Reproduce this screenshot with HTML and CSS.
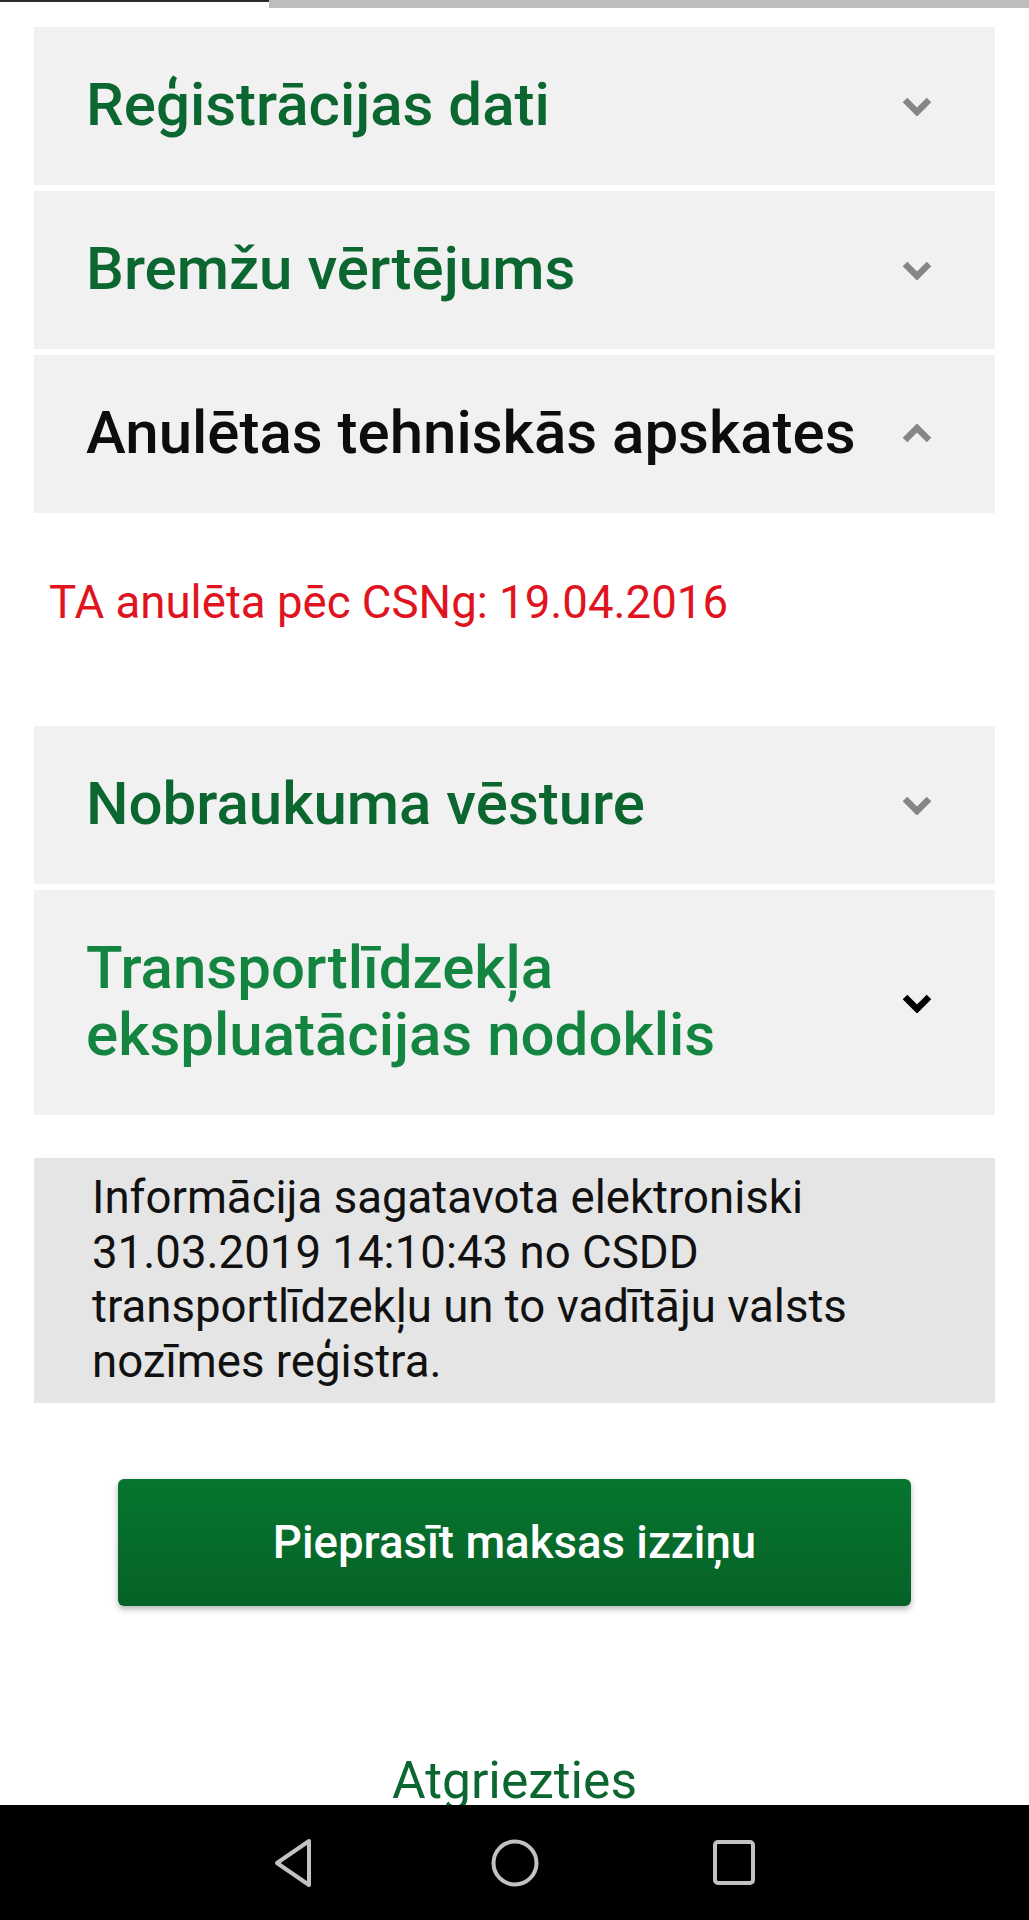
FILE: index.html
```html
<!DOCTYPE html>
<html lang="lv">
<head>
<meta charset="utf-8">
<title>Transportlīdzekļa informācija</title>
<link rel="stylesheet" href="styles.css">
</head>
<body>
<div class="screen">
  <div class="progress">
    <div class="progress-done"></div>
    <div class="progress-rest"></div>
  </div>

  <main class="content">
    <section class="accordion">
      <div class="acc-head">
        <h2 class="acc-title">Reģistrācijas dati</h2>
        <svg class="chev" viewBox="0 0 30 20"><polyline points="3,4 15,16 27,4"/></svg>
      </div>
      <div class="acc-head">
        <h2 class="acc-title">Bremžu vērtējums</h2>
        <svg class="chev" viewBox="0 0 30 20"><polyline points="3,4 15,16 27,4"/></svg>
      </div>
      <div class="acc-head acc-open">
        <h2 class="acc-title">Anulētas tehniskās apskates</h2>
        <svg class="chev" viewBox="0 0 30 20"><polyline points="3,16 15,4 27,16"/></svg>
      </div>
      <div class="acc-body">
        <p class="alert">TA anulēta pēc CSNg: 19.04.2016</p>
      </div>
      <div class="acc-head">
        <h2 class="acc-title">Nobraukuma vēsture</h2>
        <svg class="chev" viewBox="0 0 30 20"><polyline points="3,4 15,16 27,4"/></svg>
      </div>
      <div class="acc-head acc-focus">
        <h2 class="acc-title">Transportlīdzekļa<br>ekspluatācijas nodoklis</h2>
        <svg class="chev" viewBox="0 0 30 20"><polyline points="3,4 15,16 27,4"/></svg>
      </div>
    </section>

    <div class="info">
      Informācija sagatavota elektroniski<br>
      31.03.2019 14:10:43 no CSDD<br>
      transportlīdzekļu un to vadītāju valsts<br>
      nozīmes reģistra.
    </div>

    <button class="btn-primary" type="button">Pieprasīt maksas izziņu</button>

    <a class="back-link" href="#">Atgriezties</a>
  </main>
</div>

<nav class="navbar">
  <svg class="nav-icon" viewBox="0 0 48 52"><path d="M38 4 L38 48 L6 26 Z"/></svg>
  <svg class="nav-icon" viewBox="0 0 48 52"><circle cx="24" cy="26" r="21.5"/></svg>
  <svg class="nav-icon" viewBox="0 0 48 52"><rect x="4" y="5" width="38" height="41" rx="3"/></svg>
</nav>
</body>
</html>
```

FILE: styles.css
```css
* {
  box-sizing: border-box;
}

html, body {
  margin: 0;
  padding: 0;
}

body {
  width: 1029px;
  height: 1920px;
  overflow: hidden;
  background: #ffffff;
  font-family: Roboto, "Noto Sans", "Liberation Sans", sans-serif;
  color: #111111;
  display: flex;
  flex-direction: column;
}

.screen {
  height: 1805px;
  overflow: hidden;
  flex: none;
}

/* page load progress */
.progress {
  display: flex;
  height: 9px;
  align-items: flex-start;
}

.progress-done {
  width: 269px;
  height: 2px;
  background: #2a2a2a;
}

.progress-rest {
  flex: 1;
  height: 8px;
  background: #bdbdbd;
}

.content {
  padding: 18px 34px 0;
  display: flex;
  flex-direction: column;
}

/* accordion */
.accordion {
  display: flex;
  flex-direction: column;
  gap: 6px;
}

.acc-head {
  background: #f1f1f1;
  display: flex;
  align-items: center;
  justify-content: space-between;
  padding: 44px 63px 47px 52px;
}

.acc-head .chev {
  margin-top: 3px;
}

.acc-title {
  margin: 0;
  font-size: 60px;
  line-height: 67px;
  font-weight: 500;
  color: #0b6630;
}

.acc-open .acc-title {
  color: #0d0d0d;
}

.acc-focus .acc-title {
  color: #138540;
}

.chev {
  width: 30px;
  height: 20px;
  flex: none;
  fill: none;
  stroke: #868686;
  stroke-width: 6.5;
}

.acc-focus .chev {
  stroke: #000000;
}

.acc-body {
  padding: 57px 15px 90px;
}

.alert {
  margin: 0;
  font-size: 45.6px;
  line-height: 54px;
  color: #e0141e;
}

/* registry notice */
.info {
  margin-top: 43px;
  background: #e5e5e5;
  padding: 13px 20px 14px 58px;
  font-size: 45.6px;
  line-height: 54.5px;
  color: #111111;
}

.btn-primary {
  margin: 76px 0 0 84px;
  width: 793px;
  height: 127px;
  border: none;
  border-radius: 6px;
  background: linear-gradient(#06752f, #066227);
  box-shadow: 0 3px 6px rgba(0, 0, 0, 0.3);
  color: #ffffff;
  font-family: inherit;
  font-size: 45.6px;
  font-weight: 500;
}

.back-link {
  margin-top: 145px;
  align-self: center;
  font-size: 51.5px;
  line-height: 60px;
  color: #0b6630;
  text-decoration: none;
}

/* system navigation bar */
.navbar {
  flex: 1;
  background: #000000;
  display: flex;
  align-items: center;
  justify-content: center;
  gap: 172px;
}

.nav-icon {
  width: 48px;
  height: 52px;
  fill: none;
  stroke: #c2c2c2;
  stroke-width: 4;
  stroke-linejoin: round;
}
```
